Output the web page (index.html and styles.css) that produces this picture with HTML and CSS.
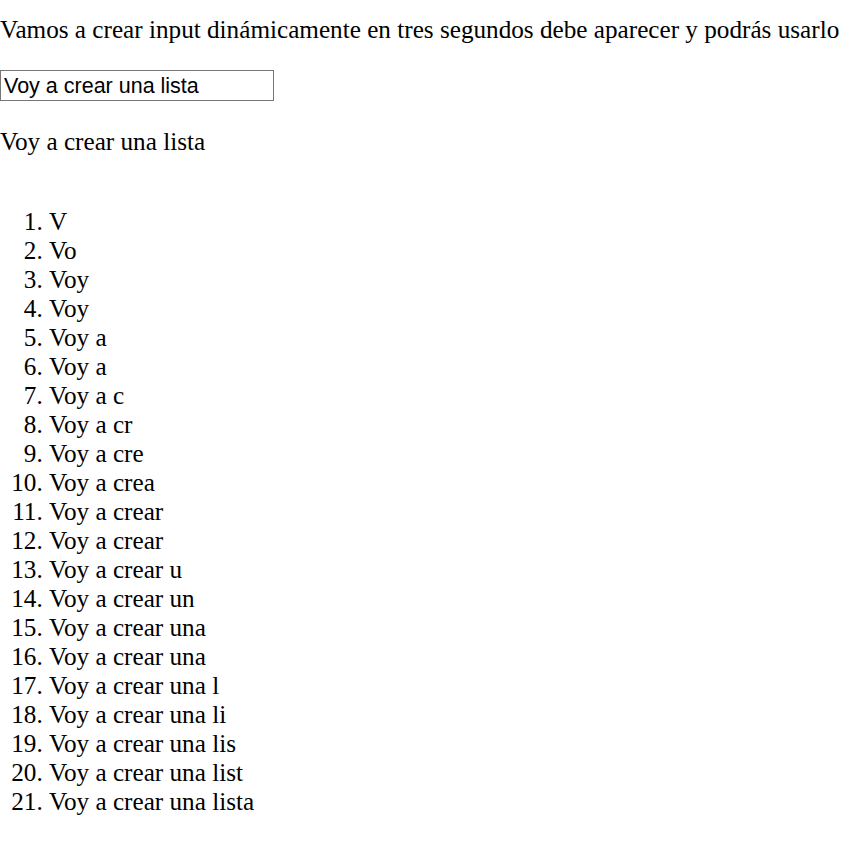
FILE: index.html
```html
<!DOCTYPE html>
<html lang="es">
<head>
<meta charset="utf-8">
<title>Input dinámico</title>
<link rel="stylesheet" href="styles.css">
</head>
<body>
<p class="intro">Vamos a crear input dinámicamente en tres segundos debe aparecer y podrás usarlo</p>
<input class="campo" type="text" value="Voy a crear una lista">
<p class="eco">Voy a crear una lista</p>
<ol class="lista">
<li>V</li>
<li>Vo</li>
<li>Voy</li>
<li>Voy</li>
<li>Voy a</li>
<li>Voy a</li>
<li>Voy a c</li>
<li>Voy a cr</li>
<li>Voy a cre</li>
<li>Voy a crea</li>
<li>Voy a crear</li>
<li>Voy a crear</li>
<li>Voy a crear u</li>
<li>Voy a crear un</li>
<li>Voy a crear una</li>
<li>Voy a crear una</li>
<li>Voy a crear una l</li>
<li>Voy a crear una li</li>
<li>Voy a crear una lis</li>
<li>Voy a crear una list</li>
<li>Voy a crear una lista</li>
</ol>
</body>
</html>
```
FILE: styles.css
```css
html, body {
  margin: 0;
  padding: 0;
  background: #ffffff;
}
body {
  font-family: "Liberation Serif", "Times New Roman", serif;
  font-size: 25.2px;
  line-height: 29px;
  color: #000000;
}
.intro {
  margin: 15px 0 26px;
  white-space: nowrap;
}
.campo {
  display: block;
  box-sizing: border-box;
  width: 274px;
  height: 31px;
  margin: 0;
  padding: 2px 3px 0;
  border: 1px solid #767676;
  border-radius: 0;
  font-family: "Liberation Sans", Arial, sans-serif;
  font-size: 21.5px;
  color: #000000;
  background: #ffffff;
}
.eco {
  margin: 26px 0 51px;
}
.lista {
  margin: 0;
  padding-left: 49px;
}
```
